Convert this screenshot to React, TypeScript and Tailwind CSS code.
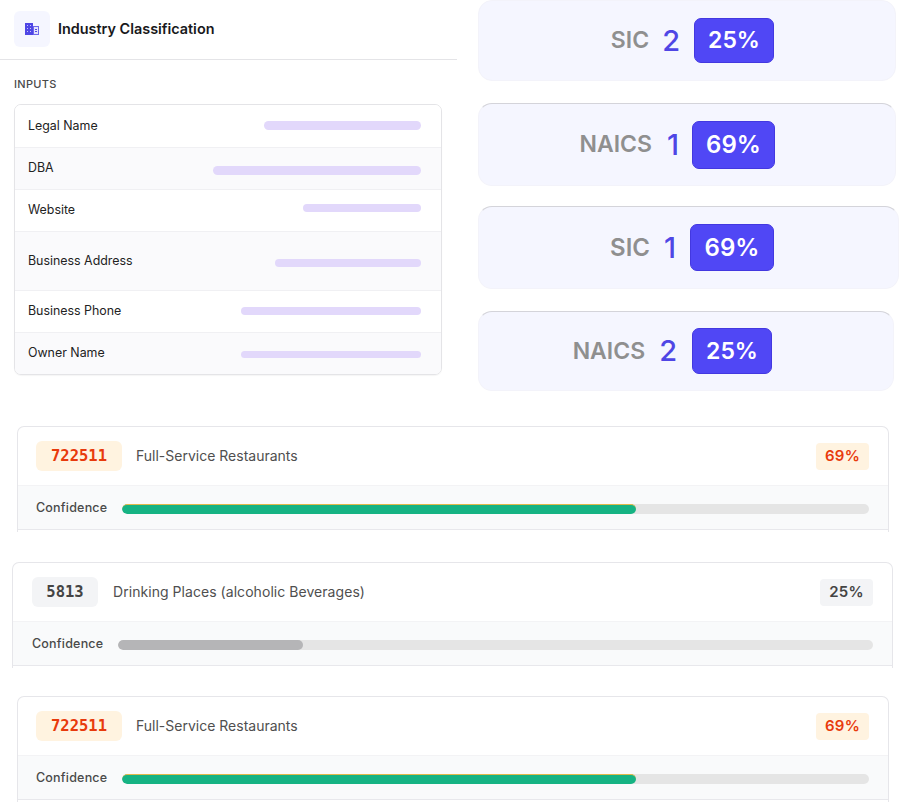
const inter = { fontFamily: "Inter, sans-serif" };

const inputRows = [
  { label: "Legal Name", rowClass: "h-[42px] bg-white", barClass: "w-[157px] h-[9px] mb-[2px]" },
  { label: "DBA", rowClass: "h-[42px] bg-[#fafafc]", barClass: "w-[208px] h-[9px] mt-[4px]" },
  { label: "Website", rowClass: "h-[42px] bg-white", barClass: "w-[118px] h-[8px] mb-[5px]" },
  { label: "Business Address", rowClass: "h-[59px] bg-[#fafafc]", barClass: "w-[146px] h-[8px] mt-[3px]" },
  { label: "Business Phone", rowClass: "h-[42px] bg-white", barClass: "w-[180px] h-[8px] mb-[2px]" },
  { label: "Owner Name", rowClass: "h-[42px] bg-[#fafafc]", barClass: "w-[180px] h-[7px] mt-[2px]" },
];

const scoreCards = [
  { name: "SIC", rank: "2", pct: "25%", cardClass: "w-[418px] h-[81px] pr-[121px]", badgeClass: "w-[80px] h-[45px] text-[23px]", nameClass: "text-[23px]", rankClass: "ml-[13px] mr-[14px]" },
  { name: "NAICS", rank: "1", pct: "69%", cardClass: "w-[418px] h-[83px] mt-[22px] pr-[120px] border-t-[#d4d4da]", badgeClass: "w-[83px] h-[48px] text-[24px]", nameClass: "text-[23px]", rankClass: "ml-[15px] mr-[13px]" },
  { name: "SIC", rank: "1", pct: "69%", cardClass: "w-[421px] h-[83px] mt-[20px] pr-[124px] border-t-[#d4d4da]", badgeClass: "w-[84px] h-[47px] text-[24px]", nameClass: "text-[24px]", rankClass: "ml-[14px] mr-[14px]" },
  { name: "NAICS", rank: "2", pct: "25%", cardClass: "w-[416px] h-[80px] mt-[22px] pr-[121px] border-t-[#d4d4da]", badgeClass: "w-[80px] h-[46px] text-[23px]", nameClass: "text-[23px]", rankClass: "ml-[14px] mr-[15px]" },
];

function BuildingIcon() {
  return (
    <svg width="14" height="12" viewBox="0 0 14 12">
      <rect x="0" y="0" width="8" height="12" fill="#4f46e5" />
      <rect x="8.5" y="3.5" width="5" height="8" fill="#e4e3fb" stroke="#6f68ea" />
      <g fill="#c7c5f8">
        <rect x="2" y="2" width="1" height="1" />
        <rect x="5" y="2" width="1" height="1" />
        <rect x="2" y="5" width="1" height="1" />
        <rect x="5" y="5" width="1" height="1" />
        <rect x="2" y="8" width="1" height="1" />
        <rect x="5" y="8" width="1" height="1" />
      </g>
      <g fill="#4f46e5">
        <rect x="10" y="6" width="2" height="1" />
        <rect x="10" y="8" width="2" height="1" />
      </g>
    </svg>
  );
}

function ScoreCard({ card }: { card: (typeof scoreCards)[number] }) {
  return (
    <div className={`flex items-center justify-end shrink-0 rounded-[14px] border border-[#f3f3fa] bg-[#f5f6ff] ${card.cardClass}`}>
      <span className={`font-semibold text-[#8f8f8f] ${card.nameClass}`}>{card.name}</span>
      <span className={`text-[29px] font-medium text-[#4f46e5] ${card.rankClass}`}>{card.rank}</span>
      <span className={`flex items-center justify-center rounded-[7px] border border-[#4338e0] bg-[#5047f5] font-semibold text-white ${card.badgeClass}`}>
        {card.pct}
      </span>
    </div>
  );
}

function CodeCard({
  code,
  title,
  pct,
  fill,
  tone,
  wrapClass,
}: {
  code: string;
  title: string;
  pct: string;
  fill: string;
  tone: "orange" | "gray";
  wrapClass: string;
}) {
  const orange = tone === "orange";
  return (
    <div className={`rounded-t-[7px] border border-b-0 border-[#e6e6ea] bg-white overflow-hidden shrink-0 ${wrapClass}`}>
      <div className={`flex items-center h-[59px] pr-[19px] border-b border-[#f3f3f5] ${orange ? "pl-[18px]" : "pl-[19px]"}`}>
        <span
          className={`flex items-center justify-center h-[30px] pt-[2px] rounded-[6px] text-[15.5px] font-bold ${
            orange ? "w-[86px] bg-[#fff3e0] text-[#e83a0c]" : "w-[66px] bg-[#f3f4f6] text-[#444444]"
          }`}
          style={{ fontFamily: '"DejaVu Sans Mono", monospace' }}
        >
          {code}
        </span>
        <span className={`mb-[1px] text-[14px] text-[#4f4f4f] ${orange ? "ml-[14px]" : "ml-[15px] tracking-[0.05px]"}`}>{title}</span>
        <span
          className={`ml-auto flex items-center justify-center w-[53px] h-[27px] rounded-[4px] text-[15px] font-semibold tracking-[0.3px] ${
            orange ? "bg-[#fff3e0] text-[#e83a0c]" : "bg-[#f3f4f6] text-[#444444]"
          }`}
        >
          {pct}
        </span>
      </div>
      <div className={`flex items-center h-[44px] pr-[19px] bg-[#f9fafb] border-b border-[#e8e8ec] ${orange ? "pl-[18px]" : "pl-[19px]"}`}>
        <span className="mt-[2px] text-[12.5px] font-medium tracking-[0.2px] text-[#4a4a4a] w-[86px] shrink-0">Confidence</span>
        <div className="mt-[2px] h-[10px] flex-1 rounded-full bg-[#e5e5e5] overflow-hidden">
          <div className={`h-full rounded-full ${fill}`} />
        </div>
      </div>
    </div>
  );
}

export default function App() {
  return (
    <div className="w-[904px] h-[805px] overflow-hidden bg-white" style={inter}>
      {/* Top */}
      <div className="flex h-[391px]">
        <div className="w-[457px] shrink-0">
          <div className="flex items-center h-[60px] pl-[14px] pb-[1px] border-b border-[#e4e4e7]">
            <div className="flex items-center justify-center w-[36px] h-[36px] rounded-[6px] bg-[#f5f6ff]">
              <BuildingIcon />
            </div>
            <span className="ml-[8px] text-[14.4px] font-semibold text-[#18181b]">Industry Classification</span>
          </div>
          <div className="pl-[14px] mt-[17px] text-[11px] font-medium tracking-[0.3px] leading-[14px] text-[#4a4a4a]">INPUTS</div>
          <div className="ml-[14px] mt-[13px] w-[428px] rounded-[7px] border border-[#e4e4e7] overflow-hidden shadow-[0_1px_1px_rgba(0,0,0,0.04)]">
            {inputRows.map((row, i) => (
              <div
                key={row.label}
                className={`flex items-center justify-between pl-[13px] pr-[20px] ${row.rowClass} ${i > 0 ? "border-t border-[#f0f0f3]" : ""}`}
              >
                <span className="text-[12.4px] text-[#222222]">{row.label}</span>
                <div className={`rounded-full bg-[#e2d8fb] ${row.barClass}`} />
              </div>
            ))}
          </div>
        </div>
        <div className="flex flex-col ml-[21px]">
          {scoreCards.map((card, i) => (
            <ScoreCard key={i} card={card} />
          ))}
        </div>
      </div>

      {/* Code cards */}
      <div className="flex flex-col">
        <CodeCard
          code="722511"
          title="Full-Service Restaurants"
          pct="69%"
          tone="orange"
          fill="w-[514px] bg-[#16b383] border-t border-[#e0b84a]"
          wrapClass="ml-[17px] w-[872px] h-[106px] mt-[35px]"
        />
        <CodeCard
          code="5813"
          title="Drinking Places (alcoholic Beverages)"
          pct="25%"
          tone="gray"
          fill="w-[185px] bg-[#b5b5b7]"
          wrapClass="ml-[12px] w-[881px] h-[106px] mt-[30px]"
        />
        <CodeCard
          code="722511"
          title="Full-Service Restaurants"
          pct="69%"
          tone="orange"
          fill="w-[514px] bg-[#16b383] border-t border-[#e0b84a]"
          wrapClass="ml-[17px] w-[872px] h-[106px] mt-[28px]"
        />
      </div>
    </div>
  );
}
